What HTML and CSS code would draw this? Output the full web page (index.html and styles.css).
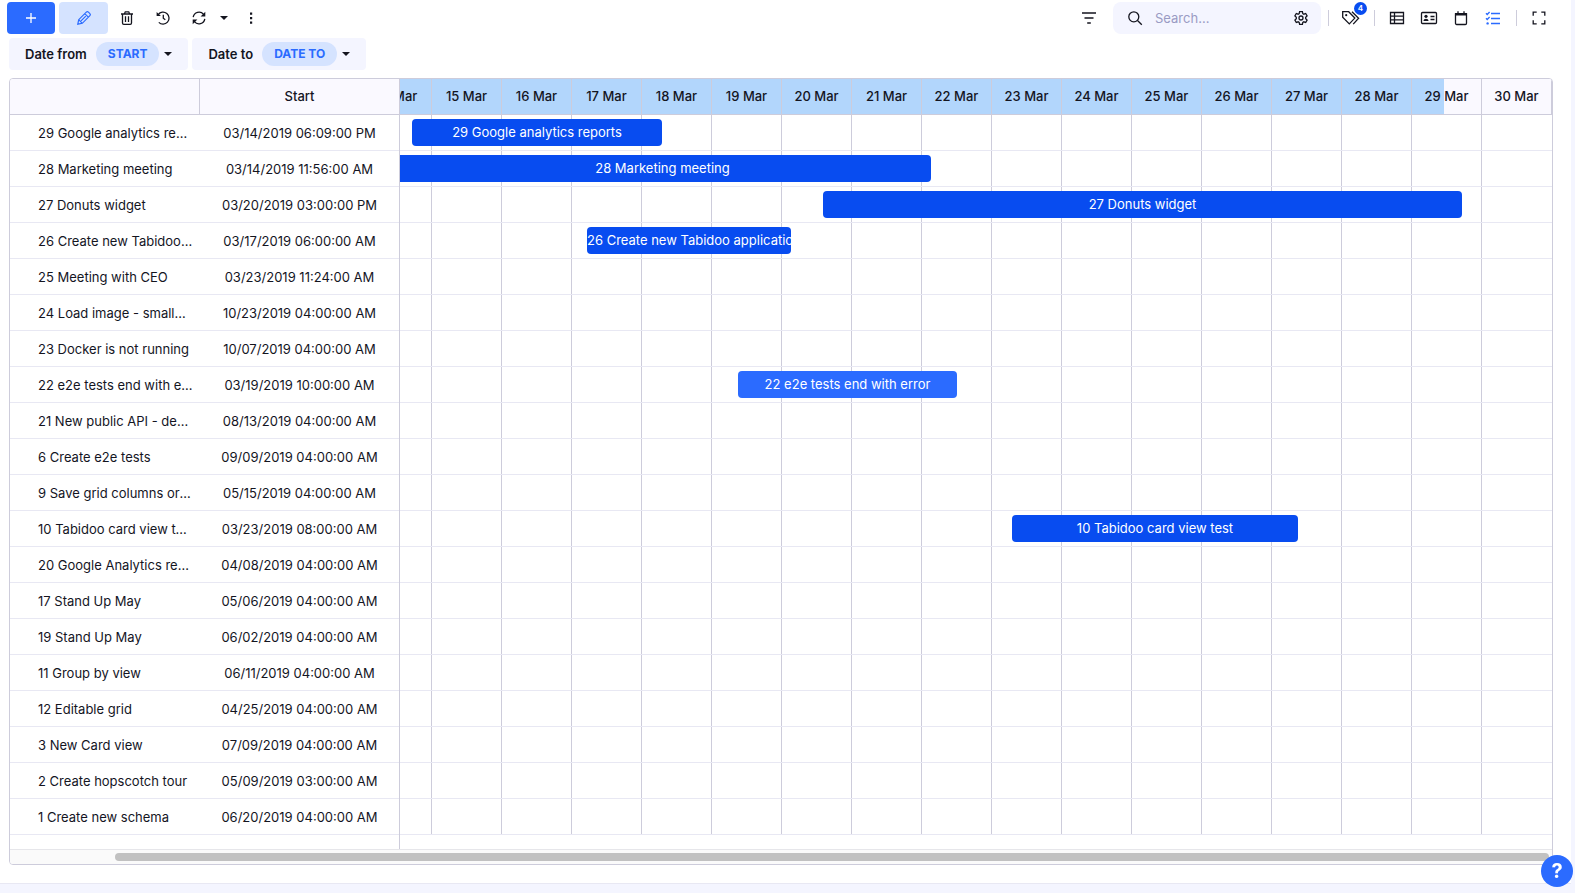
FILE: index.html
```
<!DOCTYPE html>
<html lang="en">
<head>
  <meta charset="UTF-8" />
  <meta name="viewport" content="width=device-width, initial-scale=1.0"/>
  <title>Tasks - Gantt</title>
  <link rel="stylesheet" href="styles.css">
</head>
<body>
  <main class="panel">
    <!-- Toolbar -->
    <div class="toolbar">
      <button class="btn btn-primary" aria-label="Add">
        <svg width="16" height="16" viewBox="0 0 16 16"><path d="M8 3v10M3 8h10"/></svg>
      </button>
      <button class="btn btn-light" aria-label="Edit">
        <svg width="16" height="16" viewBox="0 0 16 16"><path d="M1.8 14.2l.9-4.5 7.6-7.6a1.5 1.5 0 0 1 2.1 0l1.5 1.5a1.5 1.5 0 0 1 0 2.1l-7.6 7.6zM8.8 3.7l3.5 3.5M2.7 9.7l3.6 3.6M5 10.9l4.8-4.8"/></svg>
      </button>
      <button class="icon-btn" aria-label="Delete">
        <svg width="16" height="16" viewBox="0 0 16 16"><path d="M2 4h12M3.5 4v9c0 .9.5 1.4 1.3 1.4h6.4c.8 0 1.3-.5 1.3-1.4V4M5.3 4l1-2.2h3.4l1 2.2M6.5 6.3v5.6M9.5 6.3v5.6"/></svg>
      </button>
      <button class="icon-btn" aria-label="History">
        <svg width="16" height="16" viewBox="0 0 16 16"><path d="M3.2 4.6A6 6 0 1 1 3.8 12.4M8.3 4.8v3.4l2 1.5"/><path class="fill" d="M1.6 1.9v4.2h4.3z"/></svg>
      </button>
      <button class="icon-btn" aria-label="Refresh">
        <svg width="16" height="16" viewBox="0 0 16 16"><path d="M2.2 7.2A5.9 5.9 0 0 1 12.6 4.4M13.8 8.8A5.9 5.9 0 0 1 3.4 11.6"/><path class="fill" d="M14.3 1.8v4.7H9.6zM1.7 14.2V9.5h4.7z"/></svg>
      </button>
      <button class="caret-btn" aria-label="Refresh options"><span class="caret"></span></button>
      <button class="icon-btn dots" aria-label="More">
        <svg width="16" height="16" viewBox="0 0 16 16"><path class="fill" d="M7 2.5h2.2v2.2H7zM7 7h2.2v2.2H7zM7 11.5h2.2v2.2H7z"/></svg>
      </button>

      <div class="toolbar-right">
        <button class="icon-btn filter" aria-label="Filter">
          <svg width="16" height="16" viewBox="0 0 16 16"><path d="M1 3h14M3.5 8h9M6.2 13h3.6"/></svg>
        </button>
        <div class="search">
          <svg width="16" height="16" viewBox="0 0 16 16"><circle cx="6.8" cy="6.8" r="5"/><path d="M10.5 10.5l4.3 4.3"/></svg>
          <input type="text" placeholder="Search..." aria-label="Search">
          <button class="plain-btn" aria-label="Search settings">
            <svg width="16" height="16" viewBox="0 0 16 16"><path d="M6.6 1.7h2.8l.4 1.9 1.1.6 1.8-.7 1.4 2.4-1.4 1.4v1.4l1.4 1.4-1.4 2.4-1.8-.7-1.1.6-.4 1.9H6.6l-.4-1.9-1.1-.6-1.8.7-1.4-2.4 1.4-1.4V7.3L1.9 5.9l1.4-2.4 1.8.7 1.1-.6z"/><circle cx="8" cy="8" r="2"/></svg>
          </button>
        </div>
        <span class="divider"></span>
        <button class="plain-btn tags" aria-label="Tags">
          <svg width="20" height="16" viewBox="0 0 20 16"><path d="M1.7 1.7h6l6.1 6.4-5.5 5.8-6.6-6.6zM11 1.7l6.6 6.6-5.4 5.8"/><circle class="fill" cx="5.2" cy="5.2" r="1.1"/></svg>
          <span class="badge">4</span>
        </button>
        <span class="divider"></span>
        <div class="views">
          <button class="plain-btn" aria-label="Table view">
            <svg width="16" height="16" viewBox="0 0 16 16"><path d="M1.5 2.5h13v11h-13zM1.5 6.2h13M1.5 9.8h13M5.5 2.5v11"/></svg>
          </button>
          <button class="plain-btn" aria-label="Card view">
            <svg width="18" height="16" viewBox="0 0 18 16"><rect x="1.5" y="2.5" width="15" height="11" rx="1"/><circle class="fill" cx="6" cy="6.3" r="1.6"/><path class="fill" d="M3.5 11c0-3 5-3 5 0z"/><path d="M10.5 6.5h4M10.5 9.5h4"/></svg>
          </button>
          <button class="plain-btn" aria-label="Calendar view">
            <svg width="16" height="16" viewBox="0 0 16 16"><path d="M2.5 4h11v9.2c0 .7-.5 1.3-1.2 1.3H3.7c-.7 0-1.2-.6-1.2-1.3zM5 1.2V4M11 1.2V4"/><path class="fill" d="M2 3h12v2.5H2z"/></svg>
          </button>
          <button class="plain-btn active" aria-label="Gantt view">
            <svg width="16" height="16" viewBox="0 0 16 16"><path d="M6 3.5h9M6 8.5h9M6 13.5h9M1 3.3l1.2 1.2L4.6 2M1 8.3l1.2 1.2L4.6 7"/><circle class="fill" cx="2.6" cy="13.4" r="1.2"/></svg>
          </button>
        </div>
        <span class="divider"></span>
        <button class="plain-btn fullscreen" aria-label="Full screen">
          <svg width="16" height="16" viewBox="0 0 16 16"><path d="M2.2 5.7V2.2h3.5M10.3 2.2h3.5v3.5M13.8 10.3v3.5h-3.5M5.7 13.8H2.2v-3.5"/></svg>
        </button>
      </div>
    </div>

    <!-- Date fields -->
    <div class="date-fields">
      <button class="field">Date from <span class="pill">START</span><span class="caret"></span></button>
      <button class="field">Date to <span class="pill">DATE TO</span><span class="caret"></span></button>
    </div>

    <!-- Gantt -->
    <div class="gantt">
      <div class="gantt-body">
        <table class="tasks">
          <thead>
            <tr><th class="name" aria-label="Name"></th><th class="start">Start</th></tr>
          </thead>
          <tbody id="taskRows"></tbody>
        </table>
        <div class="timeline">
          <div class="timeline-inner">
            <div class="days" id="days"></div>
            <div class="chart" id="chart"></div>
          </div>
        </div>
      </div>
      <div class="scrollbar"><div class="thumb"></div></div>
    </div>
  </main>

  <button class="help" aria-label="Help">?</button>

  <script src="gantt.js"></script>
</body>
</html>
```
FILE: styles.css
```
:root {
  --blue: #2b6bff;
  --bar: #084cf0;
  --light-blue: #d5e3ff;
  --soft: #f4f5ff;
  --head: #faf9ff;
  --line: #cdccdb;
  --row-line: #e8e8f3;
  --text: #14151f;
}

* {
  box-sizing: border-box;
}

body {
  margin: 0;
  padding: 0 4px 9px 0;
  min-height: 100vh;
  background: var(--soft);
  color: var(--text);
  font-family: Inter, "Liberation Sans", sans-serif;
  font-size: 13px;
  display: flex;
}

button {
  font-family: inherit;
  font-size: 13px;
  color: inherit;
  border: none;
  background: none;
  padding: 0;
  cursor: pointer;
  display: flex;
  align-items: center;
  justify-content: center;
}

svg {
  display: block;
  flex: none;
  fill: none;
  stroke: currentColor;
  stroke-width: 1.3;
}

svg .fill {
  fill: currentColor;
  stroke: none;
}

.panel {
  flex: 1;
  min-width: 0;
  background: #fff;
  border-bottom: 1px solid var(--row-line);
}

/* toolbar */
.toolbar {
  display: flex;
  align-items: center;
  padding: 2px 17px 0 7px;
  height: 34px;
}

.btn {
  width: 48px;
  height: 32px;
  border-radius: 4px;
}

.btn-primary {
  margin-right: 4px;
  background: var(--blue);
  color: #fff;
}

.btn-light {
  width: 49px;
  margin-right: 1px;
  background: var(--light-blue);
  color: var(--blue);
}

.btn-light svg {
  stroke-width: 1.2;
}

.icon-btn {
  width: 36px;
  height: 32px;
}

.caret-btn {
  width: 14px;
  height: 32px;
}

.dots {
  margin-left: 2px;
}

.caret {
  border: 4px solid transparent;
  border-top-color: var(--text);
  border-bottom: none;
}

.toolbar-right {
  display: flex;
  align-items: center;
  margin-left: auto;
}

.filter {
  margin-right: 6px;
}

.search {
  width: 208px;
  height: 32px;
  background: var(--soft);
  border-radius: 8px;
  display: flex;
  align-items: center;
  padding: 0 12px 0 14px;
}

.search input {
  flex: 1;
  min-width: 0;
  border: none;
  background: none;
  outline: none;
  padding: 0 12px;
  font: inherit;
}

.search input::placeholder {
  color: #9a9bc4;
}

.divider {
  width: 1px;
  height: 16px;
  margin: 0 6px 0 7px;
  background: var(--line);
}

.tags {
  position: relative;
  width: 32px;
}

.badge {
  position: absolute;
  top: -8px;
  right: 0;
  width: 13px;
  height: 13px;
  border-radius: 50%;
  background: var(--bar);
  color: #fff;
  font-size: 8px;
  font-weight: 600;
  line-height: 13px;
}

.views {
  display: flex;
}

.views .plain-btn {
  width: 32px;
}

.views .active {
  color: var(--blue);
}

.fullscreen {
  width: 31px;
}

/* date fields */
.date-fields {
  display: flex;
  gap: 4px;
  padding: 4px 9px 8px;
}

.field {
  height: 32px;
  padding: 0 16px;
  background: var(--soft);
  border-radius: 4px;
  font-weight: 600;
}

.pill {
  height: 24px;
  line-height: 24px;
  margin: 0 5px 0 9px;
  padding: 0 12px;
  border-radius: 12px;
  background: var(--light-blue);
  color: var(--blue);
  font-size: 12px;
  font-weight: 700;
}

/* gantt */
.gantt {
  margin: 0 18px 0 9px;
  border: 1px solid var(--line);
  border-radius: 4px;
  overflow: hidden;
}

.gantt-body {
  display: flex;
  align-items: flex-start;
}

.tasks {
  width: 389px;
  flex: none;
  table-layout: fixed;
  border-collapse: separate;
  border-spacing: 0;
}

.tasks th {
  height: 36px;
  padding: 0;
  line-height: 35px;
  background: var(--head);
  border-bottom: 1px solid var(--line);
  font-weight: 500;
}

.tasks .name {
  width: 190px;
  border-right: 1px solid var(--line);
}

.tasks td {
  height: 36px;
  padding: 0 7px 0 28px;
  border-bottom: 1px solid var(--row-line);
  white-space: nowrap;
  overflow: hidden;
  text-overflow: ellipsis;
}

.tasks td.date {
  padding: 0;
  text-align: center;
}

.timeline {
  flex: 1;
  min-width: 0;
  overflow: hidden;
  padding-bottom: 14px;
  border-left: 1px solid var(--line);
}

/* scrolled to the middle of 14 Mar */
.timeline-inner {
  width: 1190px;
  margin-left: -38px;
}

.days {
  display: flex;
  height: 36px;
  border-bottom: 1px solid var(--line);
  background: linear-gradient(#b2d6fc, #b2d6fc) no-repeat var(--head);
  background-size: 1082px 36px;
}

.day {
  flex: none;
  width: 70px;
  line-height: 35px;
  text-align: center;
  font-weight: 500;
  border-right: 1px solid var(--line);
}

.chart {
  background: repeating-linear-gradient(to right, transparent 0 69px, var(--line) 69px 70px) no-repeat;
  background-size: 1120px 100%;
}

.lane {
  height: 36px;
  padding-top: 4px;
  border-bottom: 1px solid var(--row-line);
}

.bar {
  height: 27px;
  line-height: 27px;
  border-radius: 4px;
  background: var(--bar);
  color: #fff;
  text-align: center;
  white-space: nowrap;
  overflow: hidden;
}

.bar.open {
  background: var(--blue);
}

.scrollbar {
  height: 15px;
  padding: 3px 3px 0 105px;
  background: #fafafa;
  border-top: 1px solid #e6e6ea;
}

.thumb {
  height: 8px;
  border-radius: 4px;
  background: #c1c1c1;
}

.help {
  position: fixed;
  right: 2px;
  bottom: 6px;
  width: 32px;
  height: 32px;
  border-radius: 50%;
  background: var(--blue);
  color: #fff;
  font-size: 20px;
  font-weight: 700;
}
```
FILE: gantt.js
```
// left and width are measured from the start of 14 Mar, 70px per day
const tasks = [
  { name: '29 Google analytics reports', start: '03/14/2019 06:09:00 PM', left: 50, width: 250 },
  { name: '28 Marketing meeting', start: '03/14/2019 11:56:00 AM', left: 32, width: 537 },
  { name: '27 Donuts widget', start: '03/20/2019 03:00:00 PM', left: 461, width: 639 },
  { name: '26 Create new Tabidoo application', start: '03/17/2019 06:00:00 AM', left: 225, width: 204 },
  { name: '25 Meeting with CEO', start: '03/23/2019 11:24:00 AM' },
  { name: '24 Load image - smaller size', start: '10/23/2019 04:00:00 AM' },
  { name: '23 Docker is not running', start: '10/07/2019 04:00:00 AM' },
  { name: '22 e2e tests end with error', start: '03/19/2019 10:00:00 AM', left: 376, width: 219, open: true },
  { name: '21 New public API - design', start: '08/13/2019 04:00:00 AM' },
  { name: '6 Create e2e tests', start: '09/09/2019 04:00:00 AM' },
  { name: '9 Save grid columns order', start: '05/15/2019 04:00:00 AM' },
  { name: '10 Tabidoo card view test', start: '03/23/2019 08:00:00 AM', left: 650, width: 286 },
  { name: '20 Google Analytics reports', start: '04/08/2019 04:00:00 AM' },
  { name: '17 Stand Up May', start: '05/06/2019 04:00:00 AM' },
  { name: '19 Stand Up May', start: '06/02/2019 04:00:00 AM' },
  { name: '11 Group by view', start: '06/11/2019 04:00:00 AM' },
  { name: '12 Editable grid', start: '04/25/2019 04:00:00 AM' },
  { name: '3 New Card view', start: '07/09/2019 04:00:00 AM' },
  { name: '2 Create hopscotch tour', start: '05/09/2019 03:00:00 AM' },
  { name: '1 Create new schema', start: '06/20/2019 04:00:00 AM' }
];

let days = '';
for (let d = 14; d <= 30; d++) {
  days += `<div class="day">${d} Mar</div>`;
}
document.getElementById('days').innerHTML = days;

let rows = '';
let lanes = '';
tasks.forEach(t => {
  rows += `<tr><td>${t.name}</td><td class="date">${t.start}</td></tr>`;
  const bar = t.width
    ? `<div class="bar${t.open ? ' open' : ''}" style="margin-left:${t.left}px;width:${t.width}px">${t.name}</div>`
    : '';
  lanes += `<div class="lane">${bar}</div>`;
});
document.getElementById('taskRows').innerHTML = rows;
document.getElementById('chart').innerHTML = lanes;
```
